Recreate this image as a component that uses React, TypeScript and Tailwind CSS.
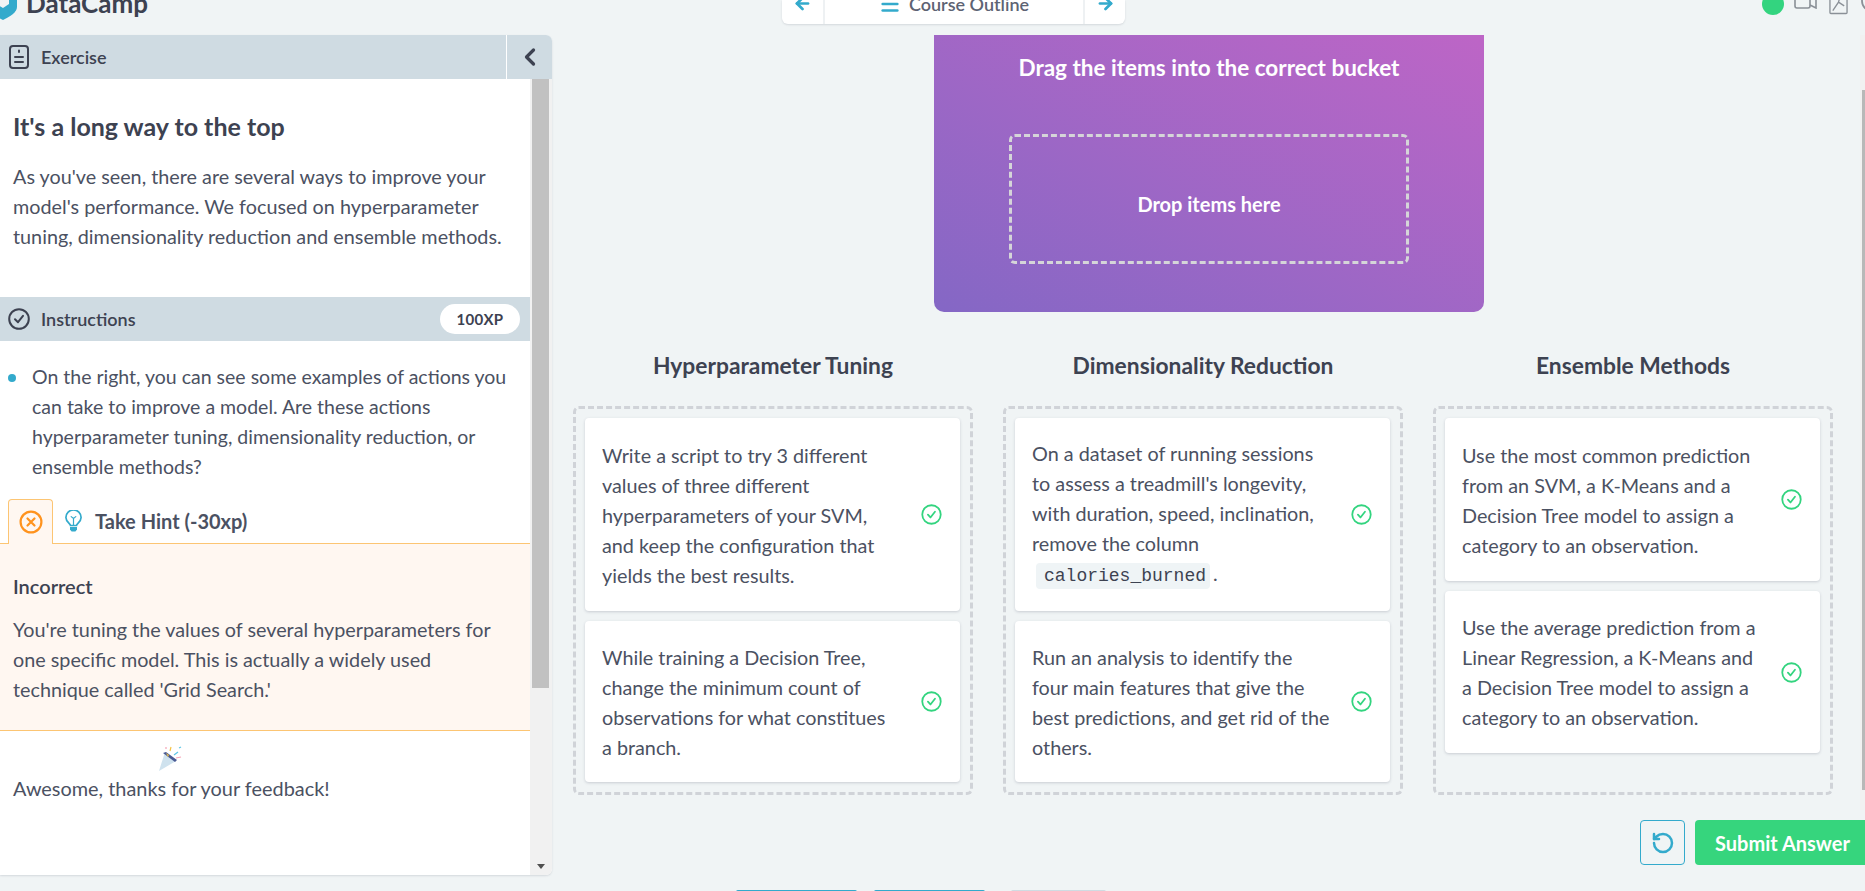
import React from "react";
import { ArrowLeft, ArrowRight, Menu, ChevronLeft, RotateCcw } from "lucide-react";

const Check = () => (
  <svg width="21" height="21" viewBox="0 0 20 20" fill="none" stroke="#33d47f" strokeWidth="1.7" strokeLinecap="round" strokeLinejoin="round">
    <circle cx="10" cy="10" r="8.8" />
    <path d="M6.6 10.2l2.4 2.6 4.3-5.4" />
  </svg>
);

function Card({ children, h }: { children: React.ReactNode; h: string }) {
  return (
    <div className={`${h} shrink-0 bg-white rounded-[4px] shadow-[0_1px_3px_rgba(60,70,90,0.22)] flex items-center pl-[17px] pr-[18px] text-[19.8px] leading-[30px] text-[#4b5162]`}>
      <div className="w-[300px] shrink-0">{children}</div>
      <div className="ml-auto"><Check /></div>
    </div>
  );
}

function Bucket({ title, children }: { title: string; children: React.ReactNode }) {
  return (
    <div className="w-[400px] flex flex-col">
      <h3 className="h-[58px] text-center text-[22.8px] leading-[34px] font-bold text-[#3d4251]">{title}</h3>
      <div className="h-[389px] border-[3px] border-dashed border-[#d0d3d8] rounded-[6px] pt-[9px] pl-[9px] pr-[10px] flex flex-col gap-[10px]">{children}</div>
    </div>
  );
}

export default function App() {
  return (
    <div className="w-[1865px] h-[891px] overflow-hidden bg-[#f0f4f5] flex flex-col font-['Lato','Liberation_Sans',sans-serif] text-[#3d4251]">
      <header className="h-[35px] shrink-0 flex items-start relative">
        <div className="flex items-center gap-[7px] -mt-[15px] -ml-[13px] w-[795px] shrink-0">
          <svg width="32" height="36" viewBox="0 0 32 36" className="shrink-0">
            <path d="M16 1L30 8v14c0 5-6 9-14 13C8 31 2 27 2 22V8z" fill="#33aacc" />
            <path d="M11 9h11v10l-6 4-5-3z" fill="#f0f4f5" />
          </svg>
          <span className="text-[26px] leading-[30px] font-bold text-[#3d4251]">DataCamp</span>
        </div>
        <nav className="h-[24px] flex bg-white rounded-b-[6px] shadow-[0_1px_2px_rgba(60,70,90,0.15)] text-[#5d6373] text-[18px]">
          <div className="w-[43px] border-r-2 border-[#eef1f3] flex items-start justify-center"><ArrowLeft size={19} strokeWidth={3.4} color="#33aacc" className="-mt-[6px]" /></div>
          <div className="w-[258px] flex items-center justify-center gap-[8px] -mt-[17px] font-semibold">
            <Menu size={22} strokeWidth={2.8} color="#33aacc" />
            <span className="leading-[22px]">Course Outline</span>
          </div>
          <div className="w-[42px] border-l-2 border-[#eef1f3] flex items-start justify-center"><ArrowRight size={19} strokeWidth={3.4} color="#33aacc" className="-mt-[6px]" /></div>
        </nav>
        <div className="ml-auto flex items-start -mt-[7px] -mr-[7px]">
          <div className="w-[22px] h-[22px] rounded-full bg-[#33d47f]" />
          <svg className="ml-[10px] -mt-[2px]" width="24" height="18" viewBox="0 0 24 18" fill="none" stroke="#8a9097" strokeWidth="1.6"><rect x="1" y="1" width="15" height="16" rx="2" /><path d="M16 8l6-3v12l-6-3" /></svg>
          <svg className="ml-[11px]" width="19" height="22" viewBox="0 0 20 22" fill="none" stroke="#8a9097" strokeWidth="1.4"><rect x="1" y="1" width="18" height="20" rx="1" /><path d="M4 18l6-9 2-7M10 9l6 4" /></svg>
          <svg className="ml-[12px]" width="12" height="20" viewBox="0 0 12 20" fill="none" stroke="#8a9097" strokeWidth="1.8"><circle cx="12" cy="8" r="10" /></svg>
        </div>
      </header>

      <div className="flex-1 flex min-h-0">
        <aside className="w-[552px] h-[840px] shrink-0 bg-white rounded-r-[6px] shadow-[0_1px_2px_rgba(60,70,90,0.15)] flex flex-col overflow-hidden">
          <div className="h-[44px] shrink-0 bg-[#cfdbe2] flex">
            <div className="flex-1 flex items-center pl-[9px] gap-[12px] text-[18px] font-semibold">
              <svg width="20" height="24" viewBox="0 0 20 24" fill="none" stroke="#3d4251" strokeWidth="2"><rect x="1" y="1" width="18" height="22" rx="3" /><path d="M10 5.5v1.5M6 12h8M6 17h8" strokeLinecap="round" /></svg>
              Exercise
            </div>
            <div className="w-[46px] border-l-[1px] border-white flex items-center justify-center"><ChevronLeft size={28} strokeWidth={2.8} /></div>
          </div>
          <div className="flex-1 flex min-h-0">
            <div className="w-[530px] shrink-0 flex flex-col">
              <div className="h-[218px] shrink-0 pl-[13px] pr-[10px] pt-[31px]">
                <h2 className="text-[25px] leading-[32px] font-bold">It's a long way to the top</h2>
                <p className="mt-[19px] text-[19.8px] leading-[30px] text-[#4b5162]">As you've seen, there are several ways to improve your model's performance. We focused on hyperparameter tuning, dimensionality reduction and ensemble methods.</p>
              </div>
              <div className="h-[44px] shrink-0 bg-[#cfdbe2] flex items-center pl-[8px] pr-[10px] gap-[11px] text-[18px] font-semibold">
                <svg width="22" height="22" viewBox="0 0 22 22" fill="none" stroke="#3d4251" strokeWidth="2" strokeLinecap="round" strokeLinejoin="round"><circle cx="11" cy="11" r="9.8" /><path d="M7 11.2l3 3 5-6.4" /></svg>
                Instructions
                <span className="ml-auto w-[80px] h-[30px] rounded-full bg-white flex items-center justify-center text-[15px] font-bold tracking-[0.3px]">100XP</span>
              </div>
              <div className="h-[158px] shrink-0 pt-[21px] pl-[32px] pr-[10px] relative text-[19.5px] leading-[30px] text-[#4b5162]">
                <span className="absolute left-[8px] top-[33px] w-[8px] h-[8px] rounded-full bg-[#33aacc]" />
                On the right, you can see some examples of actions you can take to improve a model. Are these actions hyperparameter tuning, dimensionality reduction, or ensemble methods?
              </div>
              <div className="h-[45px] shrink-0 flex items-end border-b border-[#fcc573] relative">
                <div className="ml-[8px] w-[45px] h-[45px] -mb-[1px] border border-b-0 border-[#fcc573] rounded-t-[4px] bg-[#fff7f1] flex items-center justify-center">
                  <svg width="24" height="24" viewBox="0 0 24 24" fill="none" stroke="#ff931e" strokeWidth="2.2" strokeLinecap="round"><circle cx="12" cy="12" r="10.4" /><path d="M8.5 8.5l7 7M15.5 8.5l-7 7" /></svg>
                </div>
                <div className="h-[44px] flex items-center ml-[12px] gap-[13px] text-[20px] font-bold text-[#4b5162]">
                  <svg width="17" height="22" viewBox="0 0 17 22" fill="none" stroke="#33aacc" strokeWidth="1.7" strokeLinecap="round">
                    <path d="M5.5 15.5c0-2-4.6-3.6-4.6-8a7.6 7.6 0 0 1 15.2 0c0 4.4-4.6 6-4.6 8z" />
                    <path d="M8.5 8v7M6.2 6.6l2.3 1.8 2.3-1.8" strokeWidth="1.2" />
                    <path d="M5 17h7v2.4L10.4 21.5H6.6L5 19.4z" fill="#33aacc" stroke="none" />
                  </svg>
                  Take Hint (-30xp)
                </div>
              </div>
              <div className="h-[187px] shrink-0 bg-[#fff7f1] border-b border-[#fcc573] pl-[13px] pr-[10px] pt-[27px]">
                <div className="text-[20px] leading-[30px] font-semibold">Incorrect</div>
                <p className="mt-[13px] text-[19.8px] leading-[30px] text-[#4b5162]">You're tuning the values of several hyperparameters for one specific model. This is actually a widely used technique called 'Grid Search.'</p>
              </div>
              <div className="flex-1 pl-[13px] relative">
                <svg className="absolute left-[159px] top-[14px]" width="24" height="26" viewBox="0 0 24 26">
                  <path d="M0 26L6 7l11 9z" fill="#cfe2ee" />
                  <path d="M4 8l3-1 11 8-2 2z" fill="#4a5a93" />
                  <path d="M7 8l3 2-1 2z" fill="#f5c242" />
                  <g fill="none" strokeWidth="1.2"><path d="M11 6l1-4" stroke="#f5c242" /><path d="M15 10l4-3" stroke="#5cc5e6" /><path d="M17 13l5-1" stroke="#f5a3b5" /><path d="M7 4l0-2" stroke="#f5a3b5" /><path d="M20 3l2-1" stroke="#5cc5e6" /></g>
                </svg>
                <p className="pt-[42px] text-[19.9px] leading-[30px] text-[#4b5162]">Awesome, thanks for your feedback!</p>
              </div>
            </div>
            <div className="flex-1 bg-[#f1f1f1] flex flex-col">
              <div className="ml-[2px] mr-[3px] h-[609px] bg-[#c1c1c1]" />
              <div className="mt-auto h-[17px] flex items-center justify-center">
                <div className="w-0 h-0 border-l-[4px] border-r-[4px] border-t-[5px] border-l-transparent border-r-transparent border-t-[#505050]" />
              </div>
            </div>
          </div>
        </aside>

        <main className="flex-1 flex flex-col min-w-0 relative">
          <div className="ml-[382px] w-[550px] h-[277px] rounded-b-[10px] bg-gradient-to-tr from-[#8467c5] to-[#bd65c6] flex flex-col items-center text-white font-bold">
            <div className="pt-[16px] text-[22.5px] leading-[34px]">Drag the items into the correct bucket</div>
            <div className="mt-[49px] w-[400px] h-[130px] border-[3px] border-dashed border-[#d5d5d8] rounded-[6px] flex items-center justify-center pt-[10px] text-[20px]">Drop items here</div>
          </div>
          <div className="ml-[21px] mt-[36px] flex gap-[30px]">
            <Bucket title="Hyperparameter Tuning">
              <Card h="h-[193px]">Write a script to try 3 different values of three different hyperparameters of your SVM, and keep the configuration that yields the best results.</Card>
              <Card h="h-[161px]">While training a Decision Tree, change the minimum count of observations for what constitues a&nbsp;branch.</Card>
            </Bucket>
            <Bucket title="Dimensionality Reduction">
              <Card h="h-[193px]">
                On a dataset of running sessions to assess a treadmill's longevity, with duration, speed, inclination, remove the column{" "}
                <code className="ml-[4px] -mr-[2px] pl-[8px] pr-[4px] py-[3px] rounded-[4px] bg-[#eff4f6] text-[18px] font-['Liberation_Mono',monospace] text-[#3d4251]">calories_burned</code> .
              </Card>
              <Card h="h-[161px]">Run an analysis to identify the four main features that give the best predictions, and get rid of the others.</Card>
            </Bucket>
            <Bucket title="Ensemble Methods">
              <Card h="h-[163px]">Use the most common prediction from an SVM, a K-Means and a Decision Tree model to assign a category to an observation.</Card>
              <Card h="h-[162px]">Use the average prediction from a Linear Regression, a K-Means and a Decision Tree model to assign a category to an observation.</Card>
            </Bucket>
          </div>
          <div className="mt-[25px] flex justify-end gap-[10px] -mr-[30px]">
            <button className="w-[45px] h-[45px] rounded-[4px] border border-[#33aacc] flex items-center justify-center"><RotateCcw size={24} strokeWidth={2.5} color="#33aacc" /></button>
            <button className="w-[200px] h-[45px] rounded-[4px] bg-[#36d57d] text-white text-[20px] font-bold text-left pl-[20px]">Submit Answer</button>
          </div>
          <div className="absolute left-[184px] top-[855px] flex">
            <div className="w-[121px] h-[2px] bg-[#33aacc] rounded-t" />
            <div className="ml-[17px] w-[111px] h-[2px] bg-[#33aacc] rounded-t" />
            <div className="ml-[26px] w-[95px] h-[2px] bg-[#cfdbe2] rounded-t" />
          </div>
          <div className="absolute right-0 top-0 w-[5px] h-[775px] bg-[#f1f1f1]">
            <div className="ml-[2px] mt-[55px] h-[700px] bg-[#b8b8b8]" />
          </div>
        </main>
      </div>
    </div>
  );
}
